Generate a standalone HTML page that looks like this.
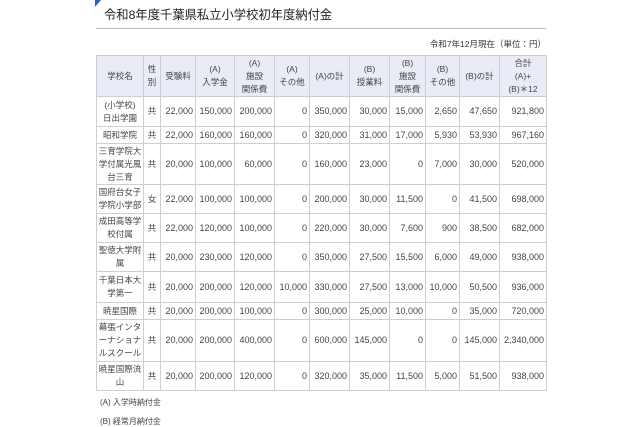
<!DOCTYPE html>
<html><head><meta charset="utf-8"><style>
body{margin:0;background:#fff;width:640px;height:426px;overflow:hidden;font-family:"Liberation Sans","Noto Sans CJK JP",sans-serif;color:#333;position:relative}
.tri{position:absolute;left:95px;top:0;width:0;height:0;border-top:7px solid #2a5fc4;border-right:6px solid transparent}
h1{position:absolute;left:104px;top:7px;margin:0;font-size:12.3px;line-height:16px;font-weight:normal;color:#222;white-space:nowrap}
.line{position:absolute;left:96px;top:28px;width:450px;height:1px;background:#a9bed4}
.date{position:absolute;right:94px;top:38px;font-size:8.5px;color:#333}
table{position:absolute;left:96px;top:55px;width:451px;border-collapse:collapse;font-size:9px;table-layout:fixed}
td,th{border:1px solid #cfcfcf;padding:0 2px;line-height:13px;font-weight:normal;color:#444;white-space:nowrap;overflow:hidden}
th{background:#e9ebf7;text-align:center;font-size:8.5px}
td{text-align:right}
td.c{text-align:center;font-size:8.5px;padding:0}
.note{position:absolute;left:100px;font-size:8px;color:#444}
</style></head><body>
<div class="tri"></div>
<h1>令和8年度千葉県私立小学校初年度納付金</h1>
<div class="line"></div>
<div class="date">令和7年12月現在（単位：円）</div>
<table>
<colgroup><col style="width:47px"><col style="width:17px"><col style="width:35px"><col style="width:39px"><col style="width:40px"><col style="width:35px"><col style="width:40px"><col style="width:40px"><col style="width:36px"><col style="width:34px"><col style="width:40px"><col style="width:47px"></colgroup>
<tr style="height:41px"><th>学校名</th><th style="padding:0">性<br>別</th><th>受験料</th><th>(A)<br>入学金</th><th>(A)<br>施設<br>関係費</th><th>(A)<br>その他</th><th>(A)の計</th><th>(B)<br>授業料</th><th>(B)<br>施設<br>関係費</th><th>(B)<br>その他</th><th>(B)の計</th><th>合計<br>(A)+<br>(B)＊12</th></tr>
<tr style="height:30px"><td class="c">(小学校)<br>日出学園</td><td class="c">共</td><td>22,000</td><td>150,000</td><td>200,000</td><td>0</td><td>350,000</td><td>30,000</td><td>15,000</td><td>2,650</td><td>47,650</td><td>921,800</td></tr>
<tr style="height:17px"><td class="c">昭和学院</td><td class="c">共</td><td>22,000</td><td>160,000</td><td>160,000</td><td>0</td><td>320,000</td><td>31,000</td><td>17,000</td><td>5,930</td><td>53,930</td><td>967,160</td></tr>
<tr style="height:41px"><td class="c">三育学院大<br>学付属光風<br>台三育</td><td class="c">共</td><td>20,000</td><td>100,000</td><td>60,000</td><td>0</td><td>160,000</td><td>23,000</td><td>0</td><td>7,000</td><td>30,000</td><td>520,000</td></tr>
<tr style="height:29px"><td class="c">国府台女子<br>学院小学部</td><td class="c">女</td><td>22,000</td><td>100,000</td><td>100,000</td><td>0</td><td>200,000</td><td>30,000</td><td>11,500</td><td>0</td><td>41,500</td><td>698,000</td></tr>
<tr style="height:29px"><td class="c">成田高等学<br>校付属</td><td class="c">共</td><td>22,000</td><td>120,000</td><td>100,000</td><td>0</td><td>220,000</td><td>30,000</td><td>7,600</td><td>900</td><td>38,500</td><td>682,000</td></tr>
<tr style="height:29px"><td class="c">聖徳大学附<br>属</td><td class="c">共</td><td>20,000</td><td>230,000</td><td>120,000</td><td>0</td><td>350,000</td><td>27,500</td><td>15,500</td><td>6,000</td><td>49,000</td><td>938,000</td></tr>
<tr style="height:31px"><td class="c">千葉日本大<br>学第一</td><td class="c">共</td><td>20,000</td><td>200,000</td><td>120,000</td><td>10,000</td><td>330,000</td><td>27,500</td><td>13,000</td><td>10,000</td><td>50,500</td><td>936,000</td></tr>
<tr style="height:17px"><td class="c">暁星国際</td><td class="c">共</td><td>20,000</td><td>200,000</td><td>100,000</td><td>0</td><td>300,000</td><td>25,000</td><td>10,000</td><td>0</td><td>35,000</td><td>720,000</td></tr>
<tr style="height:42px"><td class="c">幕張インタ<br>ーナショナ<br>ルスクール</td><td class="c">共</td><td>20,000</td><td>200,000</td><td>400,000</td><td>0</td><td>600,000</td><td>145,000</td><td>0</td><td>0</td><td>145,000</td><td>2,340,000</td></tr>
<tr style="height:29px"><td class="c">暁星国際流<br>山</td><td class="c">共</td><td>20,000</td><td>200,000</td><td>120,000</td><td>0</td><td>320,000</td><td>35,000</td><td>11,500</td><td>5,000</td><td>51,500</td><td>938,000</td></tr>
</table>
<div class="note" style="top:397px">(A) 入学時納付金</div>
<div class="note" style="top:416px">(B) 経常月納付金</div>
</body></html>
